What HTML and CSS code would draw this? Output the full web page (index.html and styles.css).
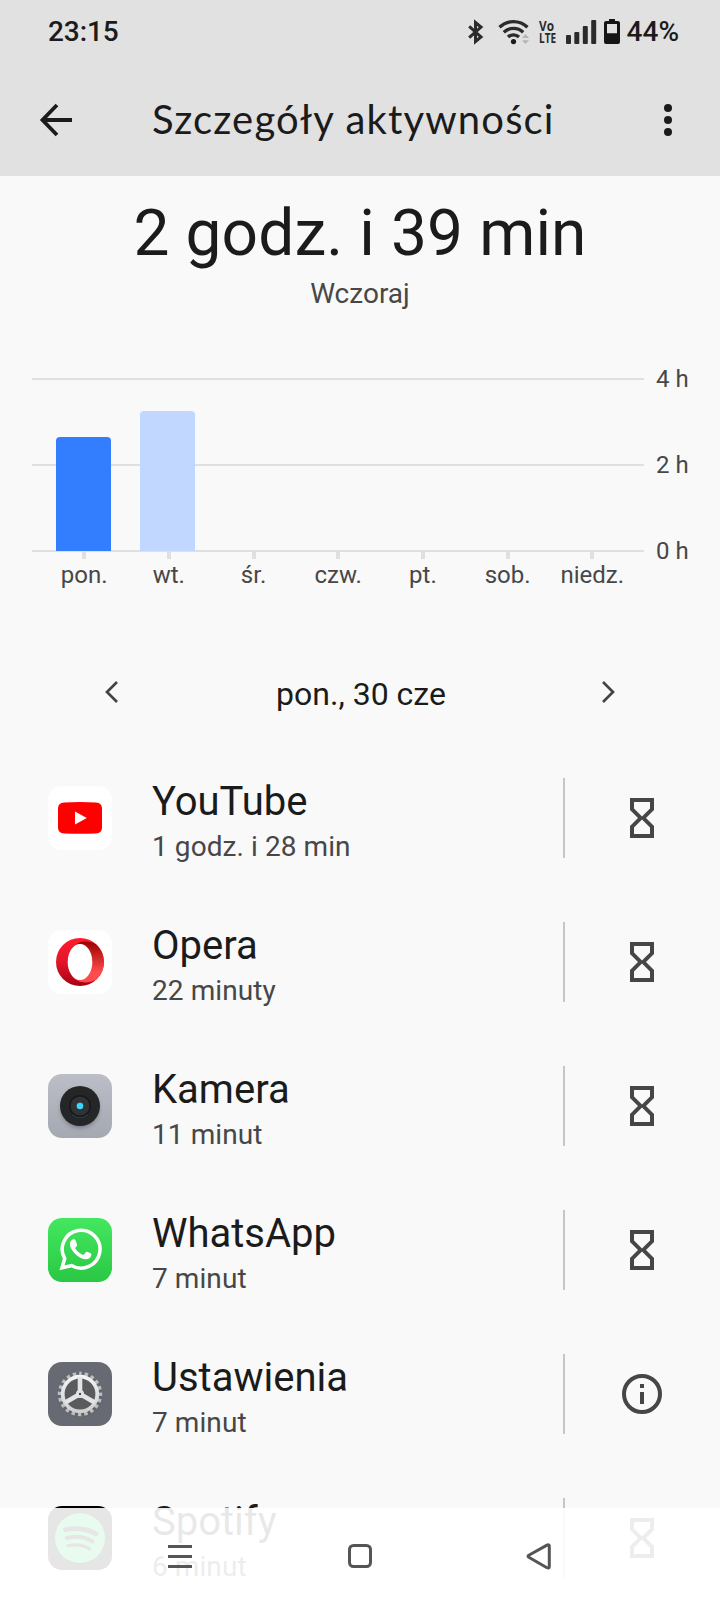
FILE: index.html
```
<!DOCTYPE html>
<html lang="pl">
<head>
<meta charset="utf-8">
<title>Szczegóły aktywności</title>
<link rel="stylesheet" href="styles.css">
</head>
<body>
<svg class="defs" width="0" height="0">
  <symbol id="hourglass" viewBox="0 0 24 40"><path fill-rule="evenodd" d="M0 0H24V12L16 20L24 28V40H0V28L8 20L0 12ZM4 4V10.6L12 18.6L20 10.6V4ZM12 21.4L4 29.4V36H20V29.4Z"/></symbol>
</svg>
<div class="screen">
  <header class="top">
    <div class="status">
      <span class="clock">23:15</span>
      <div class="status-icons">
        <svg class="bt" width="16" height="26" viewBox="0 0 16 26" fill="none" stroke="#2b2b2b" stroke-width="3"><path d="M1.2 7.300L13 18L7.500 22.500V3.500L13 8L1.200 18.700"/></svg>
        <svg class="wifi" width="32" height="26" viewBox="0 0 32 26"><g fill="none" stroke="#2b2b2b" stroke-width="3.3"><path d="M1.5 8.3A20 20 0 0 1 29.5 8.3"/><path d="M5.8 13.2A14 14 0 0 1 25.2 13.2"/><path d="M10 18A8 8 0 0 1 21 18"/></g><circle cx="15.5" cy="22.6" r="2.6" fill="#1b1b1b"/><path d="M24 19L27.5 15L31 19ZM24 21.3H31L27.5 25Z" fill="#b5b5b5"/></svg>
        <svg class="volte" width="17" height="26" viewBox="0 0 17 26"><text x="0" y="12.2" textLength="15" lengthAdjust="spacingAndGlyphs">Vo</text><text x="0" y="24" textLength="17" lengthAdjust="spacingAndGlyphs">LTE</text></svg>
        <svg class="signal" width="31" height="26" viewBox="0 0 31 26" fill="#2b2b2b"><rect x="0" y="16" width="5" height="9" rx="1"/><rect x="8.3" y="13" width="5" height="12" rx="1"/><rect x="16.8" y="7" width="5" height="18" rx="1"/><rect x="25.2" y="1" width="5" height="24" rx="1"/></svg>
        <svg class="battery" width="16" height="26" viewBox="0 0 16 26"><path fill="#151515" fill-rule="evenodd" d="M5 0H11V2H14A2 2 0 0 1 16 4V23A2 2 0 0 1 14 25H2A2 2 0 0 1 0 23V4A2 2 0 0 1 2 2H5ZM3 5V14.3H13V5Z"/></svg>
        <span class="percent">44%</span>
      </div>
    </div>
    <div class="appbar">
      <svg class="back" width="34" height="34" viewBox="0 0 34 34" fill="none" stroke="#1b1b1b" stroke-width="3.8"><path d="M18 2L3.500 17L18 32M3.500 17H33"/></svg>
      <h1>Szczegóły aktywności</h1>
      <svg class="more" width="8" height="32" viewBox="0 0 8 32" fill="#1b1b1b"><circle cx="4" cy="4" r="4"/><circle cx="4" cy="16" r="4"/><circle cx="4" cy="28" r="4"/></svg>
    </div>
  </header>

  <section class="summary">
    <div class="total">2 godz. i 39 min</div>
    <div class="when">Wczoraj</div>
  </section>

  <section class="chart">
    <div class="plot">
      <div class="lines"><i></i><i></i><i></i></div>
      <div class="bars">
        <div class="bar selected" style="height:114px"></div>
        <div class="bar" style="height:140px"></div>
        <div class="bar" style="height:0"></div>
        <div class="bar" style="height:0"></div>
        <div class="bar" style="height:0"></div>
        <div class="bar" style="height:0"></div>
        <div class="bar" style="height:0"></div>
      </div>
    </div>
    <div class="scale"><span>4 h</span><span>2 h</span><span>0 h</span></div>
    <div class="days"><span>pon.</span><span>wt.</span><span>śr.</span><span>czw.</span><span>pt.</span><span>sob.</span><span>niedz.</span></div>
  </section>

  <nav class="datepick">
    <svg width="13" height="22" viewBox="0 0 13 22" fill="none" stroke="#444" stroke-width="2.7"><path d="M12 1L2 11L12 21"/></svg>
    <span>pon., 30 cze</span>
    <svg width="13" height="22" viewBox="0 0 13 22" fill="none" stroke="#444" stroke-width="2.7"><path d="M1 1L11 11L1 21"/></svg>
  </nav>

  <main class="apps">
    <div class="app">
      <svg class="icon" viewBox="0 0 64 64"><rect width="64" height="64" rx="14" fill="#fff"/><path d="M16 16.4Q32 15.6 48 16.4Q54 16.6 54 22.5V41.5Q54 47.2 48 47.4Q32 48.2 16 47.4Q10 47.2 10 41.5V22.5Q10 16.6 16 16.4Z" fill="#f00"/><path d="M27 25.6V38.4L38.8 32Z" fill="#fff"/></svg>
      <div class="info"><div class="name">YouTube</div><div class="time">1 godz. i 28 min</div></div>
      <div class="action"><svg class="timer"><use href="#hourglass"/></svg></div>
    </div>
    <div class="app">
      <svg class="icon" viewBox="0 0 64 64">
        <defs><linearGradient id="op1" x1="0" y1="0" x2="0" y2="1"><stop offset="0" stop-color="#ff1b2d"/><stop offset=".5" stop-color="#e2162a"/><stop offset="1" stop-color="#a70014"/></linearGradient><linearGradient id="op2" x1="0" y1="0" x2="0" y2="1"><stop offset="0" stop-color="#9c0000"/><stop offset=".75" stop-color="#ff4b4b"/></linearGradient></defs>
        <rect width="64" height="64" rx="14" fill="#fff"/><circle cx="32" cy="32" r="24" fill="url(#op1)"/><path d="M24.5 17.5C31 10 40.5 10.500 48 14.200A24 24 0 0 1 48 49.800C40.500 53.500 31 54 24.500 46.500Z" fill="url(#op2)"/><ellipse cx="32" cy="32" rx="12.300" ry="18" fill="#fff"/>
      </svg>
      <div class="info"><div class="name">Opera</div><div class="time">22 minuty</div></div>
      <div class="action"><svg class="timer"><use href="#hourglass"/></svg></div>
    </div>
    <div class="app">
      <svg class="icon" viewBox="0 0 64 64">
        <defs><linearGradient id="cam" x1="0" y1="0" x2="0" y2="1"><stop offset="0" stop-color="#bbbec6"/><stop offset="1" stop-color="#a4a8b1"/></linearGradient><filter id="soft" x="-30%" y="-30%" width="160%" height="160%"><feGaussianBlur stdDeviation="2"/></filter></defs>
        <rect width="64" height="64" rx="14" fill="url(#cam)"/><circle cx="32" cy="35" r="19" fill="#555b66" opacity=".6" filter="url(#soft)"/><circle cx="32" cy="32" r="20" fill="#252627"/><circle cx="32" cy="32" r="11" fill="#161718"/><circle cx="32" cy="32" r="9.500" fill="#303233"/><path d="M24 40.500A11.500 11.500 0 0 0 40 40.500" fill="none" stroke="#1e4547"/><circle cx="32" cy="32" r="4.500" fill="#2a383c"/><circle cx="32" cy="32" r="3.300" fill="#3dd5fa"/>
      </svg>
      <div class="info"><div class="name">Kamera</div><div class="time">11 minut</div></div>
      <div class="action"><svg class="timer"><use href="#hourglass"/></svg></div>
    </div>
    <div class="app">
      <svg class="icon" viewBox="0 0 64 64">
        <defs><linearGradient id="wa" x1="0" y1="0" x2="0" y2="1"><stop offset="0" stop-color="#43e85f"/><stop offset="1" stop-color="#2ac844"/></linearGradient></defs>
        <rect width="64" height="64" rx="14" fill="url(#wa)"/><path d="M14 49.800L16.700 40.600A18.900 18.900 0 1 1 23.500 47.500Z" fill="none" stroke="#fff" stroke-width="3.500"/><path d="M25.100 21.300C26.600 20.900 27.100 21.500 27.500 22.600L29 26.200C29.400 27.300 28.900 27.800 27.500 29.500C27.100 30.100 27.300 30.700 28 31.600C29.900 34.100 32 35.700 34.700 36.700C35.500 37 35.900 36.700 36.400 36.100L37.900 34.200C38.500 33.500 39.100 33.600 39.800 33.900L42.600 35.300C43.400 35.700 43.500 36.100 43.300 37.300C42.800 40.400 39.700 41.700 37.200 41.300C33.700 40.700 30.100 39 26.800 35.400C24.200 32.600 21.900 29.600 21.900 26.300C21.900 23.900 23.300 21.900 25.100 21.300Z" fill="#fff"/>
      </svg>
      <div class="info"><div class="name">WhatsApp</div><div class="time">7 minut</div></div>
      <div class="action"><svg class="timer"><use href="#hourglass"/></svg></div>
    </div>
    <div class="app">
      <svg class="icon" viewBox="0 0 64 64">
        <defs><linearGradient id="gear" x1="0" y1="0" x2="0" y2="1"><stop offset="0" stop-color="#f4f4f4"/><stop offset="1" stop-color="#cfcfcf"/></linearGradient></defs>
        <rect width="64" height="64" rx="14" fill="#676a72"/><circle cx="32" cy="33.500" r="19" fill="#4b4d53" opacity=".6" filter="url(#soft)"/><circle cx="32" cy="32" r="20.300" fill="none" stroke="#bcbdbf" stroke-width="3.800" stroke-dasharray="3.400 2.978" stroke-dashoffset="1.700" transform="rotate(-90 32 32)"/><circle cx="32" cy="32" r="17" fill="#5a5b5f"/><circle cx="32" cy="32" r="17.300" fill="none" stroke="url(#gear)" stroke-width="3.800"/><path d="M32 32V15M32 32L17.300 40.500M32 32L46.700 40.500" stroke="#e4e4e4" stroke-width="4.600" fill="none"/><circle cx="32" cy="32" r="4" fill="#e4e4e4"/><circle cx="32" cy="32" r="1.200" fill="#4b4c50"/>
      </svg>
      <div class="info"><div class="name">Ustawienia</div><div class="time">7 minut</div></div>
      <div class="action"><svg width="40" height="40" viewBox="0 0 40 40" fill="#464646"><circle cx="20" cy="20" r="18" fill="none" stroke="#464646" stroke-width="4"/><rect x="18" y="10" width="4" height="4"/><rect x="18" y="18" width="4" height="12"/></svg></div>
    </div>
    <div class="app">
      <svg class="icon" viewBox="0 0 64 64"><rect width="64" height="64" rx="14" fill="#000"/><circle cx="32" cy="32" r="25" fill="#1ed760"/><g fill="none" stroke="#000" stroke-linecap="round"><path d="M17.500 23.800C27 21.300 39 22.500 48 28" stroke-width="4.800"/><path d="M18.800 32C27 29.800 37 31 44.500 35.500" stroke-width="4"/><path d="M20 39.800C27 38.200 35 38.800 41.800 43" stroke-width="3.200"/></g></svg>
      <div class="info"><div class="name">Spotify</div><div class="time">6 minut</div></div>
      <div class="action"><svg class="timer"><use href="#hourglass"/></svg></div>
    </div>
  </main>

  <footer class="sysnav">
    <svg width="28" height="28" viewBox="0 0 28 28" fill="#555"><rect x="2" y="2" width="24" height="3"/><rect x="2" y="12" width="24" height="3"/><rect x="2" y="22" width="24" height="3"/></svg>
    <svg width="28" height="28" viewBox="0 0 28 28" fill="none" stroke="#555" stroke-width="3"><rect x="3.500" y="2.500" width="21" height="21" rx="4"/></svg>
    <svg width="28" height="28" viewBox="0 0 28 28" fill="none" stroke="#555" stroke-width="3" stroke-linejoin="round"><path d="M2.800 12.300Q1.300 13.300 2.800 14.300L21 24.700Q23.300 25.700 23.300 23.500V3Q23.300 1 21 2.100Z"/></svg>
  </footer>
</div>
</body>
</html>
```
FILE: styles.css
```
* { box-sizing: border-box; }
body {
  margin: 0;
  background: #f9f9f9;
  color: #1b1b1b;
  font-family: Roboto, "Noto Sans", sans-serif;
}
svg { display: block; flex: none; }
.defs { position: absolute; }
.screen {
  position: relative;
  width: 720px;
  height: 1604px;
  overflow: hidden;
}
.top { height: 176px; background: #e1e1e1; }
.status {
  display: flex;
  justify-content: space-between;
  height: 64px;
  padding: 0 41px 0 48px;
  font-size: 28px;
  line-height: 63px;
  font-weight: 500;
}
.clock { letter-spacing: -.1px; }
.status-icons { display: flex; padding-top: 19px; }
.wifi { margin-left: 14px; }
.volte {
  margin-left: 9px;
  overflow: visible;
  font: 700 14.5px "Open Sans", sans-serif;
  fill: #2b2b2b;
}
.signal { margin-left: 10px; }
.battery { margin-left: 7px; }
.percent { margin: -19px 0 0 7px; }
.appbar {
  display: flex;
  align-items: center;
  height: 112px;
  padding: 0 48px 0 39px;
}
h1 {
  flex: 1;
  margin: -2px 0 0 79px;
  font: 400 40px/48px Lato, sans-serif;
  letter-spacing: 1.15px;
  white-space: nowrap;
}
.summary { padding-top: 20px; text-align: center; }
.total { font-size: 64px; line-height: 76px; letter-spacing: .12px; }
.when { margin-top: 2px; font-size: 28px; line-height: 40px; color: #474747; }
.chart {
  display: grid;
  grid-template-columns: 612px auto;
  column-gap: 12px;
  margin-top: 64px;
  padding-left: 32px;
  font-size: 24px;
  color: #474747;
}
.plot { display: grid; height: 174px; }
.lines, .bars { grid-area: 1 / 1; display: flex; }
.lines { flex-direction: column; justify-content: space-between; }
.lines i { height: 2px; background: #e0e0e0; }
.bars {
  display: grid;
  grid-template-columns: repeat(7, 84px);
  padding: 0 0 1px 9.5px;
  align-items: end;
  justify-items: center;
}
.bar { width: 55px; border-radius: 4px 4px 0 0; background: #c2d7ff; }
.bar.selected { background: #337dff; }
.scale {
  display: flex;
  flex-direction: column;
  justify-content: space-between;
  margin: -13px 0;
  line-height: 28px;
}
.days {
  display: grid;
  grid-template-columns: repeat(7, 84.7px);
  grid-column: 1;
  padding-left: 9.8px;
  line-height: 28px;
  text-align: center;
}
.days span::before {
  content: "";
  display: block;
  width: 4px;
  height: 7px;
  margin: 0 auto 2px;
  background: #e0e0e0;
}
.datepick {
  display: flex;
  align-items: center;
  justify-content: space-between;
  height: 40px;
  margin-top: 85px;
  padding: 0 105px;
  font-size: 32px;
}
.datepick svg { margin-top: -5px; }
.datepick span { padding-left: 2px; }
.apps { margin-top: 32px; }
.app { display: flex; align-items: center; height: 144px; padding-left: 48px; }
.icon { width: 64px; height: 64px; }
.info { flex: 1; margin: 10px 0 0 40px; }
.name { font-size: 40px; line-height: 48px; }
.time { font-size: 28px; line-height: 42px; letter-spacing: .08px; color: #474747; }
.action {
  display: flex;
  align-items: center;
  justify-content: center;
  width: 157px;
  height: 80px;
  padding-right: 1px;
  border-left: 2px solid #c6c6c6;
}
.timer { width: 24px; height: 40px; fill: #464646; }
.sysnav {
  position: absolute;
  left: 0;
  right: 0;
  bottom: 0;
  display: flex;
  justify-content: space-between;
  height: 96px;
  padding: 35px 166px 0;
  background: rgba(255, 255, 255, .9);
}
```
